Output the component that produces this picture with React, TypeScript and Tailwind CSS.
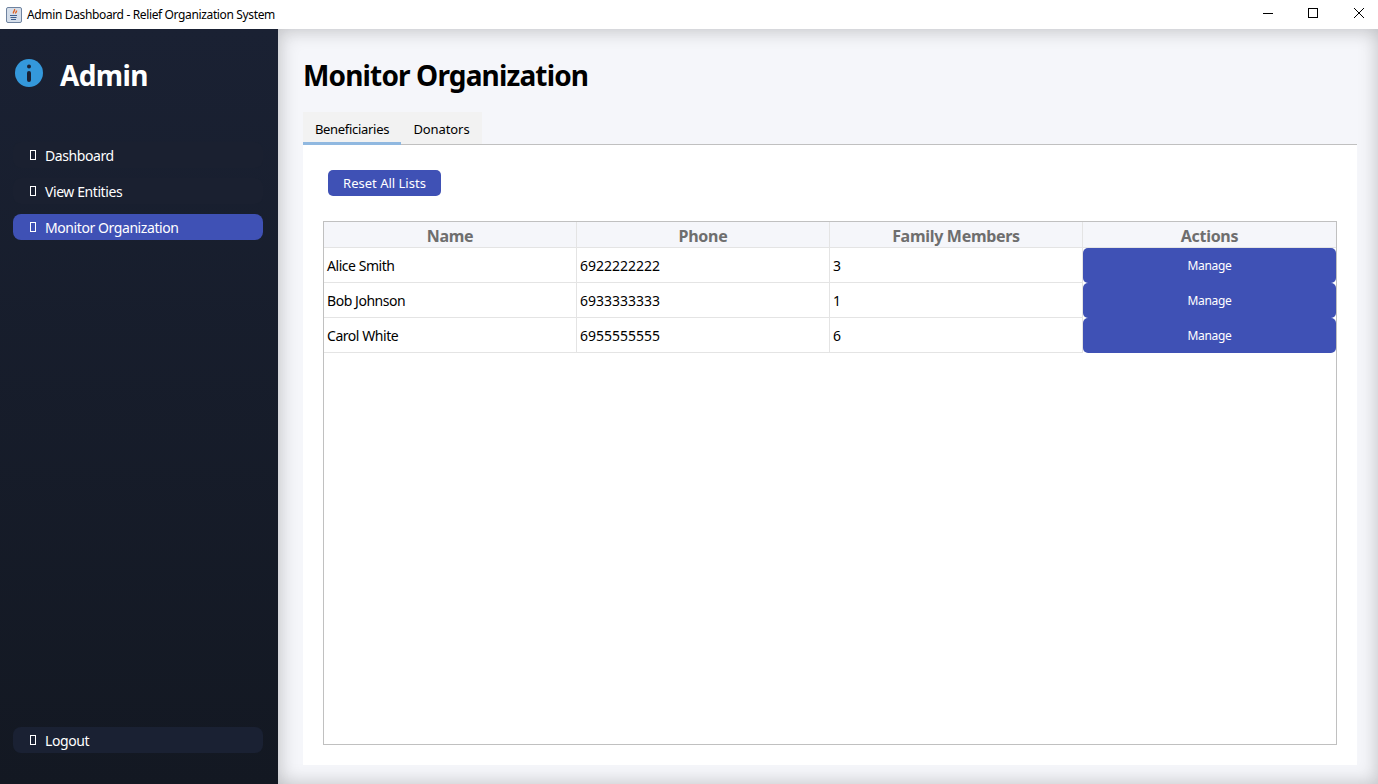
const rows = [
  { name: 'Alice Smith', phone: '6922222222', members: '3' },
  { name: 'Bob Johnson', phone: '6933333333', members: '1' },
  { name: 'Carol White', phone: '6955555555', members: '6' },
]

function NavItem({ label, active, light }: { label: string; active?: boolean; light?: boolean }) {
  return (
    <div
      className={`flex h-[26px] w-[250px] items-center rounded-lg pl-[17px] text-[14px] tracking-[-0.42px] text-white ${
        active ? 'bg-[#3f51b5]' : light ? 'bg-[#1a2133]' : 'bg-[#1a2030]'
      }`}
    >
      <span className="h-[10px] w-[6px] border border-white" />
      <span className="ml-[9px]">{label}</span>
    </div>
  )
}

function TitleBar() {
  return (
    <div className="flex h-[29px] items-center bg-white pl-[6px]">
      <svg width="16" height="16" viewBox="0 0 16 16">
        <rect x="0.5" y="0.5" width="15" height="15" rx="1.5" fill="#d5deea" stroke="#6f83a0" />
        <path d="M8.5 2c1 2-2 2.500-1 4.500M10.500 3.500c.5 1.500-1.500 2-.8 3" fill="none" stroke="#e0601f" strokeWidth="1.300" />
        <path d="M4 8.500h7M4.500 10.500h6M5 12.500h5" stroke="#3f5f8e" strokeWidth="1" />
      </svg>
      <span className="ml-[5px] text-[12px] tracking-[-0.36px] text-black">Admin Dashboard - Relief Organization System</span>
      <div className="ml-auto flex items-center">
        <svg width="138" height="29" viewBox="0 0 138 29" fill="none" stroke="#000">
          <path d="M23 13.500h10" />
          <rect x="68.500" y="8.500" width="9" height="9" />
          <path d="M114 8l10 10M124 8l-10 10" />
        </svg>
      </div>
    </div>
  )
}

function Sidebar() {
  return (
    <div className="flex w-[278px] shrink-0 flex-col bg-gradient-to-b from-[#1a2133] to-[#131822] pl-[13px]">
      <div className="mt-[30px] flex h-[28px] items-center pl-[2px]">
        <svg width="28" height="28" viewBox="0 0 28 28">
          <circle cx="14" cy="14" r="14" fill="#3498db" />
          <circle cx="14" cy="7.500" r="2" fill="#1a2133" />
          <rect x="12" y="12" width="4" height="11" rx="2" fill="#1a2133" />
        </svg>
        <span className="ml-[17px] translate-y-[2px] text-[28px] font-bold leading-none tracking-[-0.6px] text-white">Admin</span>
      </div>
      <div className="mt-[55px] flex flex-col gap-[10px]">
        <NavItem label="Dashboard" />
        <NavItem label="View Entities" />
        <NavItem label="Monitor Organization" active />
      </div>
      <div className="mt-auto mb-[31px]">
        <NavItem label="Logout" light />
      </div>
    </div>
  )
}

function BeneficiariesTable() {
  return (
    <div className="h-[524px] border border-[#c0c0c0]">
      <div className="grid h-[26px] grid-cols-[253px_253px_253px_253px] border-b border-[#e4e4e4] bg-[#f5f6fa] text-[16px] leading-[24px] font-bold tracking-[-0.3px] text-[#6e6e6e]">
        <div className="border-r border-[#e4e4e4] pt-[2px] text-center">Name</div>
        <div className="border-r border-[#e4e4e4] pt-[2px] text-center">Phone</div>
        <div className="border-r border-[#e4e4e4] pt-[2px] text-center">Family Members</div>
        <div className="pt-[2px] text-center">Actions</div>
      </div>
      {rows.map((row) => (
        <div key={row.name} className="grid h-[35px] grid-cols-[253px_253px_253px_253px] text-[14px] text-black">
          <div className="flex items-center border-r border-b border-[#e4e4e4] pl-[3px] tracking-[-0.45px]">{row.name}</div>
          <div className="flex items-center border-r border-b border-[#e4e4e4] pl-[3px]">{row.phone}</div>
          <div className="flex items-center border-r border-b border-[#e4e4e4] pl-[3px]">{row.members}</div>
          <div className="flex items-center justify-center rounded-[5px] bg-[#3f51b5] text-[12px] tracking-[-0.3px] text-white">Manage</div>
        </div>
      ))}
    </div>
  )
}

export default function App() {
  return (
    <div className="flex h-[784px] w-[1378px] flex-col overflow-hidden font-['Noto_Sans','Open_Sans',sans-serif]">
      <TitleBar />
      <div className="flex min-h-0 flex-1">
        <Sidebar />
        <div className="flex-1 bg-[#f5f6fa] pt-[29px] pr-[21px] pb-[19px] pl-[25px] shadow-[inset_4px_4px_18px_rgba(0,0,0,0.14),inset_-4px_-4px_18px_rgba(0,0,0,0.1)]">
          <h1 className="h-[54px] text-[28px] leading-[34px] font-bold tracking-[-0.85px] text-black">Monitor Organization</h1>
          <div className="flex h-[33px] border-b border-[#c0c0c0]">
            <div className="flex h-[33px] w-[98px] items-center justify-center border-b-[3px] border-[#90b8e0] bg-[#f2f2f2] pt-[5px] text-[13px] tracking-[-0.3px] text-black">Beneficiaries</div>
            <div className="flex h-[32px] w-[81px] items-center justify-center bg-[#f2f2f2] pt-[4px] text-[13px] tracking-[-0.1px] text-black">Donators</div>
          </div>
          <div className="h-[620px] bg-white pt-[25px] pr-[20px] pl-[20px]">
            <button className="ml-[5px] block h-[26px] w-[113px] rounded-[5px] bg-[#3f51b5] pt-[2px] text-[13px] text-white">Reset All Lists</button>
            <div className="mt-[25px]">
              <BeneficiariesTable />
            </div>
          </div>
        </div>
      </div>
    </div>
  )
}
